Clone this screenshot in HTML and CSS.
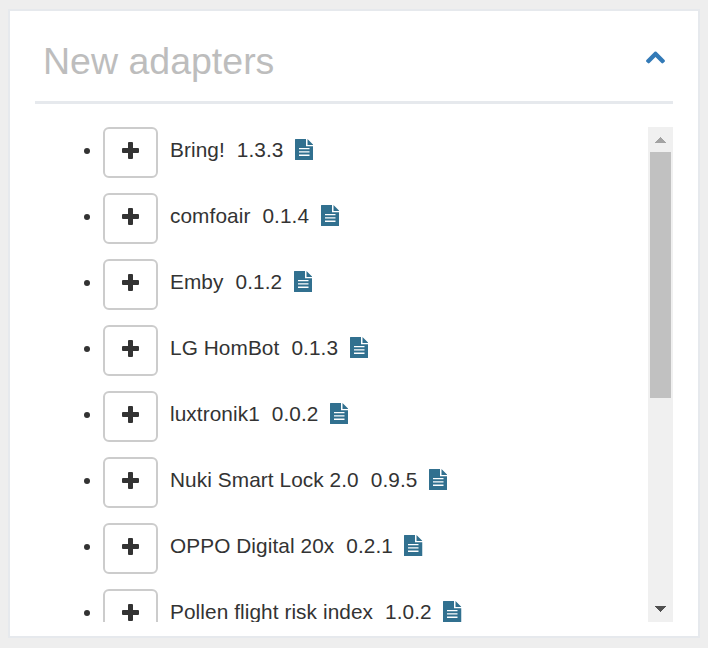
FILE: index.html
```html
<!DOCTYPE html>
<html lang="en">
<head>
<meta charset="utf-8">
<title>New adapters</title>
<link rel="stylesheet" href="styles.css">
</head>
<body>
<svg class="symbols" aria-hidden="true">
  <symbol id="plus" viewBox="0 0 17 17"><path d="M7 0h3q1 0 1 1v5h5q1 0 1 1v3q0 1-1 1h-5v5q0 1-1 1h-3q-1 0-1-1v-5h-5q-1 0-1-1v-3q0-1 1-1h5v-5q0-1 1-1z"/></symbol>
  <symbol id="file" viewBox="0 0 18.500 21"><path fill-rule="evenodd" d="M.5 0h10.500v7.200h7.500v13.300q0 .5-.5.500h-17.500q-.5 0-.5-.5v-20q0-.5.5-.5zM4 9v1.300h10.500v-1.300zM4 12.300v1.300h10.500v-1.300zM4 15.600v1.300h10.500v-1.300zM12.500 0 18.500 6h-6z"/></symbol>
</svg>
<section class="panel">
  <header class="panel-header">
    <h2 class="title">New adapters</h2>
    <svg class="chevron" viewBox="0 0 20 14"><path d="M10.500 .4q.5 0 .9.400l8.200 8.200q.7.900 0 1.700l-1.400 1.400q-.9.700-1.700 0L10.500 6.100l-6 6q-.8.700-1.700 0L1.400 10.700q-.7-.8 0-1.700L9.600.8q.4-.4.900-.4z"/></svg>
  </header>
  <div class="content">
    <ul class="list">
      <li class="row"><span class="button"><svg class="plus"><use href="#plus"/></svg></span><span class="name">Bring!</span><span class="version">1.3.3</span><svg class="file"><use href="#file"/></svg></li>
      <li class="row"><span class="button"><svg class="plus"><use href="#plus"/></svg></span><span class="name">comfoair</span><span class="version">0.1.4</span><svg class="file"><use href="#file"/></svg></li>
      <li class="row"><span class="button"><svg class="plus"><use href="#plus"/></svg></span><span class="name">Emby</span><span class="version">0.1.2</span><svg class="file"><use href="#file"/></svg></li>
      <li class="row"><span class="button"><svg class="plus"><use href="#plus"/></svg></span><span class="name">LG HomBot</span><span class="version">0.1.3</span><svg class="file"><use href="#file"/></svg></li>
      <li class="row"><span class="button"><svg class="plus"><use href="#plus"/></svg></span><span class="name">luxtronik1</span><span class="version">0.0.2</span><svg class="file"><use href="#file"/></svg></li>
      <li class="row"><span class="button"><svg class="plus"><use href="#plus"/></svg></span><span class="name">Nuki Smart Lock 2.0</span><span class="version">0.9.5</span><svg class="file"><use href="#file"/></svg></li>
      <li class="row"><span class="button"><svg class="plus"><use href="#plus"/></svg></span><span class="name">OPPO Digital 20x</span><span class="version">0.2.1</span><svg class="file"><use href="#file"/></svg></li>
      <li class="row"><span class="button"><svg class="plus"><use href="#plus"/></svg></span><span class="name">Pollen flight risk index</span><span class="version">1.0.2</span><svg class="file"><use href="#file"/></svg></li>
    </ul>
    <div class="scrollbar">
      <svg class="arrow arrow-up" viewBox="0 0 11 6" shape-rendering="crispEdges"><path d="M0 6 5.500 0 11 6z"/></svg>
      <div class="thumb"></div>
      <svg class="arrow arrow-down" viewBox="0 0 11 6" shape-rendering="crispEdges"><path d="M0 0h11L5.500 6z"/></svg>
    </div>
  </div>
</section>
</body>
</html>
```
FILE: styles.css
```css
* { box-sizing: border-box; }
body {
  margin: 0;
  height: 648px;
  padding: 9px 8px 10px;
  overflow: hidden;
  background: #eee;
  color: #333;
  font: 20.8px/30px "Liberation Sans", Arial, sans-serif;
}
.symbols { display: none; }
.panel {
  height: 629px;
  padding: 0 25px;
  border: 2px solid #e6e9ed;
  background: #fff;
}
.panel-header {
  display: flex;
  justify-content: space-between;
  height: 93px;
  padding: 29px 8px 0;
  border-bottom: 3px solid #e6e9ed;
}
.title {
  margin: 0;
  color: #bdbdbd;
  font-size: 37.5px;
  font-weight: 400;
  line-height: 42px;
}
.chevron {
  width: 20px;
  height: 14px;
  margin-top: 11px;
  fill: #337ab7;
}
.content {
  display: flex;
  justify-content: space-between;
  height: 495px;
  margin-top: 23px;
  overflow: hidden;
}
.list {
  margin: 0;
  padding: 0 0 0 49px;
  list-style: none;
}
.row {
  display: flex;
  align-items: flex-start;
  height: 66px;
  letter-spacing: 0.08px;
  white-space: nowrap;
}
.row::before {
  content: "";
  width: 6px;
  height: 6px;
  margin: 21px 13px 0 0;
  border-radius: 50%;
  background: #333;
}
.button {
  display: flex;
  align-items: center;
  justify-content: center;
  width: 55px;
  height: 51px;
  padding: 0 1px 4px 0;
  border: 2px solid #ccc;
  border-radius: 6px;
}
.plus { width: 17px; height: 17px; fill: #333; }
.name { margin: 8px 0 0 12px; }
.version { margin: 8px 0 0 12px; }
.file {
  width: 18.5px;
  height: 21px;
  margin: 12px 0 0 11.5px;
  fill: #31708f;
}
.scrollbar {
  display: flex;
  flex-direction: column;
  align-items: center;
  width: 25px;
  background: #f0f0f0;
}
.arrow { width: 11px; height: 6px; }
.arrow-up { margin: 10px 0 9px; fill: #a3a3a3; }
.thumb { width: 21px; height: 246px; background: #c1c1c1; }
.arrow-down { margin: auto 0 10px; fill: #505050; }
```
